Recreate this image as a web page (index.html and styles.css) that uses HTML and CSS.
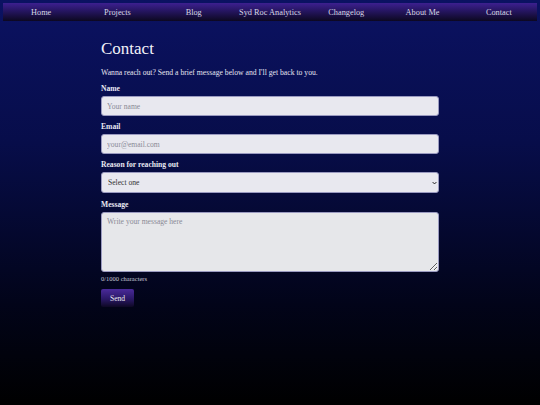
FILE: index.html
```html
<!DOCTYPE html>
<html lang="en">
<head>
<meta charset="utf-8">
<title>Contact</title>
<link rel="stylesheet" href="styles.css">
</head>
<body>
<nav class="nav">
  <a class="nav-item" href="#">Home</a>
  <a class="nav-item" href="#">Projects</a>
  <a class="nav-item" href="#">Blog</a>
  <a class="nav-item" href="#">Syd Roc Analytics</a>
  <a class="nav-item" href="#">Changelog</a>
  <a class="nav-item" href="#">About Me</a>
  <a class="nav-item" href="#">Contact</a>
</nav>
<main class="main">
  <h1 class="title">Contact</h1>
  <p class="intro">Wanna reach out? Send a brief message below and I'll get back to you.</p>
  <form class="form">
    <label class="label" for="name">Name</label>
    <input class="field" id="name" type="text" placeholder="Your name">
    <label class="label" for="email">Email</label>
    <input class="field" id="email" type="email" placeholder="your@email.com">
    <label class="label" for="reason">Reason for reaching out</label>
    <div class="select-wrap">
      <select class="field select" id="reason">
        <option>Select one</option>
      </select>
      <svg class="chev" viewBox="0 0 8 5" width="5" height="4"><path d="M1 1l3 3 3-3" fill="none" stroke="#222" stroke-width="1.6"/></svg>
    </div>
    <label class="label label-msg" for="msg">Message</label>
    <textarea class="field area" id="msg" placeholder="Write your message here"></textarea>
    <div class="count">0/1000 characters</div>
    <button class="send" type="button">Send</button>
  </form>
</main>
</body>
</html>
```
FILE: styles.css
```css
html { height: 100%; }
body {
  margin: 0;
  min-height: 100%;
  background: linear-gradient(180deg, #0b1262 0%, #070d4a 35%, #020419 75%, #000 100%);
  font-family: "Liberation Serif", "DejaVu Serif", serif;
  color: #e8e8f2;
  padding-top: 3px;
  box-sizing: border-box;
}
.nav {
  display: flex;
  margin: 0 3px;
  height: 18px;
  background: linear-gradient(180deg, #3d2090 0%, #251560 45%, #0c0820 100%);
}
.nav-item {
  flex: 1;
  display: flex;
  align-items: center;
  justify-content: center;
  color: #d8d8e4;
  text-decoration: none;
  font-size: 8.3px;
}
.main {
  width: 338px;
  margin: 0 auto;
  padding-top: 18px;
}
.title {
  margin: 0;
  font-size: 17px;
  font-weight: normal;
  line-height: 20px;
  color: #f2f2f8;
}
.intro {
  margin: 9px 0 0;
  font-size: 7.7px;
  line-height: 10px;
  color: #e4e4f0;
}
.form {
  display: flex;
  flex-direction: column;
  margin-top: 6px;
}
.label {
  font-size: 7.6px;
  font-weight: bold;
  line-height: 10px;
  margin-bottom: 2px;
}
.label-msg { margin-top: 1px; }
.field {
  display: block;
  box-sizing: border-box;
  width: 100%;
  height: 20px;
  margin: 0 0 6px;
  padding: 0 5px;
  background: #e8e8ef;
  border: 1px solid #9a9ac0;
  border-radius: 3px;
  font-family: "Liberation Serif", "DejaVu Serif", serif;
  font-size: 7.6px;
  color: #333;
}
.field::placeholder { color: #8a8a96; }
.select-wrap { position: relative; }
.select {
  -webkit-appearance: none;
  appearance: none;
  height: 21px;
  color: #333;
  padding: 0 6px;
}
.chev {
  position: absolute;
  right: 2px;
  top: 9px;
}
.area {
  height: 60px;
  padding: 4px 5px;
  background: #e6e7ea;
  resize: vertical;
  margin-bottom: 2px;
}
.count {
  font-size: 6.5px;
  line-height: 9px;
  color: #c8c8d6;
}
.send {
  align-self: flex-start;
  margin-top: 6px;
  width: 33px;
  height: 18px;
  border: none;
  border-radius: 2px;
  background: linear-gradient(180deg, #4a2a9a 0%, #2a1866 55%, #0e0824 100%);
  color: #e8e8f2;
  font-family: "Liberation Serif", "DejaVu Serif", serif;
  font-size: 7.6px;
  padding: 0;
}
```
